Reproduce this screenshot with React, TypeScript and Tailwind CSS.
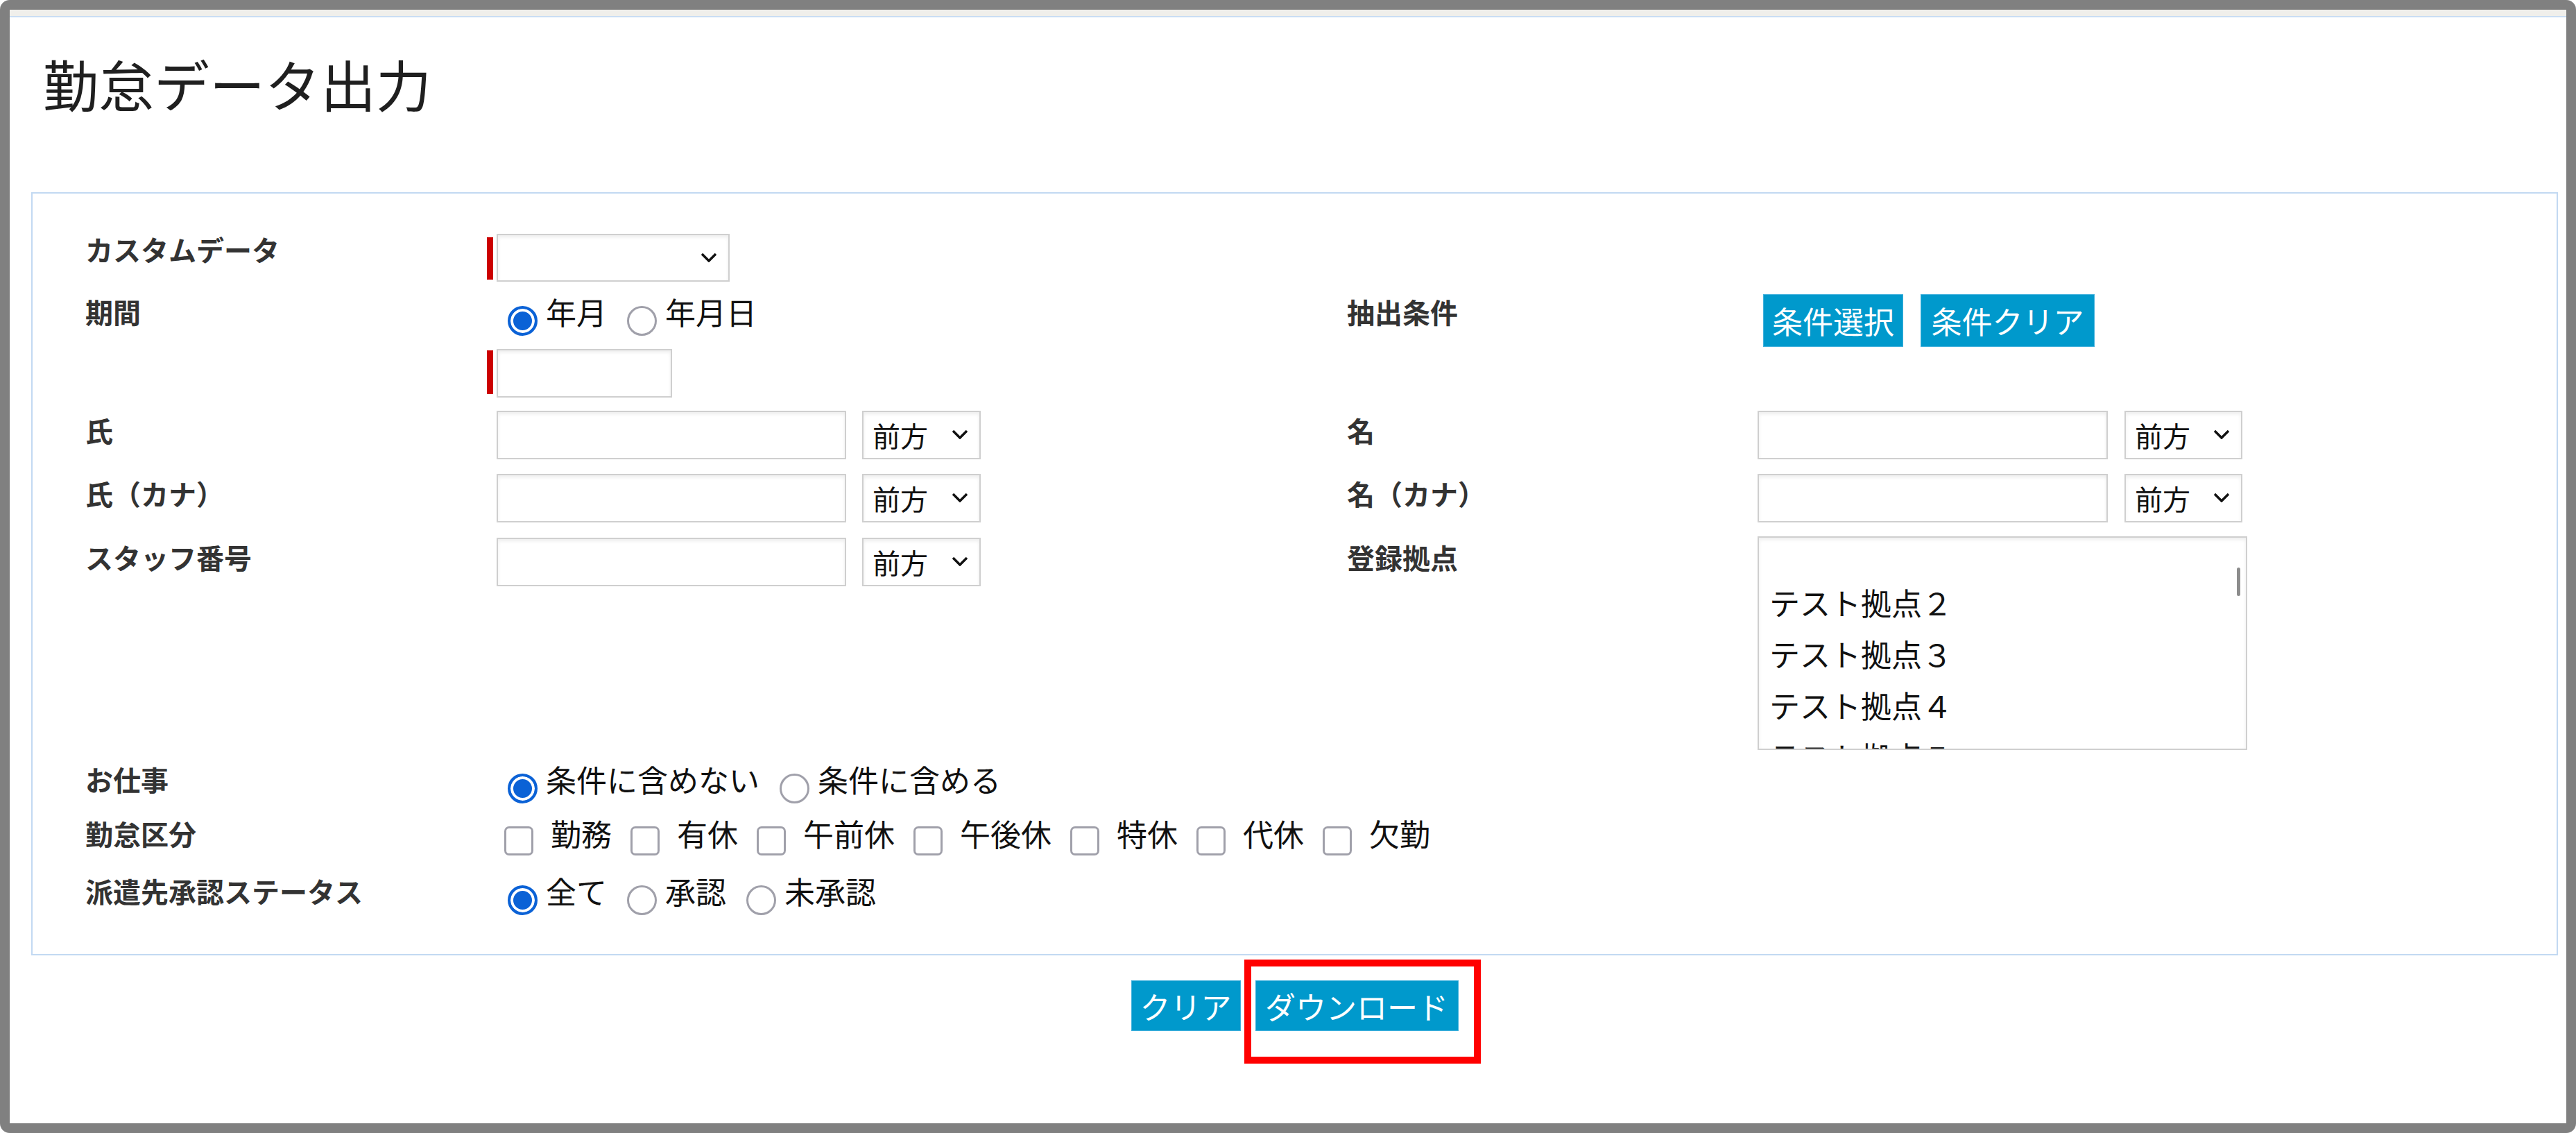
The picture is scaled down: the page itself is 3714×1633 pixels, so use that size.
import React from 'react';

const labelCls = 'shrink-0 text-[40px] leading-[60px] font-bold text-[#333333]';
const fieldCls = 'h-[70px] border-2 border-[#cfcfcf] bg-white shadow-[inset_0_3px_5px_rgba(0,0,0,0.07)]';

const Chevron = () => (
  <svg
    className="pointer-events-none absolute right-[18px] top-[27px]"
    width="24"
    height="14"
    viewBox="0 0 24 14"
  >
    <path d="M2 2 L12 12 L22 2" stroke="#111" strokeWidth="3.5" fill="none" />
  </svg>
);

const Select = ({ className, text }: { className: string; text?: string }) => (
  <div className={`relative ${className}`}>
    <select className="h-full w-full appearance-none border-2 border-[#cfcfcf] bg-white pl-[13px] text-[40px] text-[#111] shadow-[inset_0_3px_5px_rgba(0,0,0,0.07)]">
      <option>{text ?? ''}</option>
    </select>
    <Chevron />
  </div>
);

const Radio = ({ name, label, checked }: { name: string; label: string; checked?: boolean }) => (
  <label className="flex items-start">
    <input
      type="radio"
      name={name}
      defaultChecked={checked}
      className="mt-[22px] ml-[16px] mr-[12px] h-[43px] w-[43px] shrink-0 appearance-none rounded-full border-[3px] border-[#a0a0aa] bg-white checked:border-[4px] checked:border-[#0b62d6] checked:bg-[#0b62d6] checked:shadow-[inset_0_0_0_4px_white]"
    />
    <span className="mr-[13px] text-[44px] leading-[60px] text-[#111]">{label}</span>
  </label>
);

const Check = ({ label }: { label: string }) => (
  <label className="flex items-start">
    <input
      type="checkbox"
      className="mt-[20px] ml-[11px] mr-[25px] h-[42px] w-[42px] shrink-0 appearance-none rounded-[7px] border-[3px] border-[#a0a0aa] bg-white"
    />
    <span className="mr-[16px] text-[44px] leading-[60px] text-[#111]">{label}</span>
  </label>
);

const Btn = ({ className, children }: { className: string; children: React.ReactNode }) => (
  <button className={`border border-[#3fb0dc] bg-[#0099cc] text-[44px] leading-none text-white ${className}`}>
    {children}
  </button>
);

const NameField = () => (
  <div className="flex pl-[14px]">
    <input type="text" className={`mt-[2px] w-[504px] ${fieldCls}`} />
    <Select className="mt-[2px] ml-[23px] h-[70px] w-[171px]" text="前方" />
  </div>
);

export default function App() {
  const kubun = ['勤務', '有休', '午前休', '午後休', '特休', '代休', '欠勤'];

  return (
    <div className="h-screen w-screen overflow-hidden bg-white font-['Noto_Sans_CJK_JP','Noto_Sans',sans-serif]">
      <div className="flex h-full flex-col rounded-[14px] border-[14px] border-[#808080]">
        <div className="h-[11px] shrink-0 border-b-2 border-[#c9ddf4] bg-[#f0efeb]" />

        <h1 className="mt-[54px] ml-[48px] text-[80px] leading-none font-normal text-[#1f1f1f]">勤怠データ出力</h1>

        <div className="mt-[118px] ml-[31px] w-[3643px] border-2 border-[#c2d9f2] pt-[50px] pb-[57px] pl-[76px]">
          {/* カスタムデータ */}
          <div className="flex h-[90px]">
            <div className={`w-[579px] ${labelCls}`}>カスタムデータ</div>
            <div className="flex items-start">
              <span className="mt-[13px] mr-[5px] h-[61px] w-[9px] bg-[#cc0000]" />
              <Select className="mt-[8px] h-[69px] w-[336px]" />
            </div>
          </div>

          {/* 期間 / 抽出条件 */}
          <div className="flex h-[82px]">
            <div className={`w-[579px] ${labelCls}`}>期間</div>
            <div className="flex w-[1240px] pl-[14px]">
              <Radio name="kikan" label="年月" checked />
              <Radio name="kikan" label="年月日" />
            </div>
            <div className={`w-[592px] ${labelCls}`}>抽出条件</div>
            <div className="mt-[5px] ml-[8px] flex gap-[25px]">
              <Btn className="h-[76px] w-[202px]">条件選択</Btn>
              <Btn className="h-[76px] w-[251px]">条件クリア</Btn>
            </div>
          </div>

          {/* 期間入力 */}
          <div className="flex h-[89px]">
            <div className="w-[579px] shrink-0" />
            <div className="flex items-start">
              <span className="mt-[4px] mr-[5px] h-[63px] w-[9px] bg-[#cc0000]" />
              <input type="text" className={`mt-[2px] w-[253px] ${fieldCls}`} />
            </div>
          </div>

          {/* 氏 / 名 */}
          <div className="flex h-[91px]">
            <div className={`w-[579px] ${labelCls}`}>氏</div>
            <div className="w-[1240px] shrink-0">
              <NameField />
            </div>
            <div className={`w-[592px] ${labelCls}`}>名</div>
            <div className="flex">
              <input type="text" className={`mt-[2px] w-[505px] ${fieldCls}`} />
              <Select className="mt-[2px] ml-[24px] h-[70px] w-[170px]" text="前方" />
            </div>
          </div>

          {/* 氏（カナ） / 名（カナ） */}
          <div className="flex h-[92px]">
            <div className={`w-[579px] ${labelCls}`}>氏（カナ）</div>
            <div className="w-[1240px] shrink-0">
              <NameField />
            </div>
            <div className={`w-[592px] ${labelCls}`}>名（カナ）</div>
            <div className="flex">
              <input type="text" className={`mt-[2px] w-[505px] ${fieldCls}`} />
              <Select className="mt-[2px] ml-[24px] h-[70px] w-[170px]" text="前方" />
            </div>
          </div>

          {/* スタッフ番号 / 登録拠点 */}
          <div className="flex h-[320px]">
            <div className={`w-[579px] ${labelCls}`}>スタッフ番号</div>
            <div className="w-[1240px] shrink-0">
              <NameField />
            </div>
            <div className={`w-[592px] ${labelCls}`}>登録拠点</div>
            <div className="relative h-[308px] w-[706px] overflow-hidden border-2 border-[#cfcfcf] bg-white shadow-[inset_0_3px_5px_rgba(0,0,0,0.07)]">
              <ul className="pt-[56px] pl-[15px] text-[44px] text-[#111]">
                {['２', '３', '４', '５'].map((n) => (
                  <li key={n} className="h-[74px] leading-[74px]">
                    テスト拠点{n}
                  </li>
                ))}
              </ul>
              <span className="absolute top-[43px] right-[8px] h-[41px] w-[5px] rounded-full bg-[#8c8c8c]" />
            </div>
          </div>

          {/* お仕事 */}
          <div className="flex h-[78px]">
            <div className={`w-[579px] ${labelCls}`}>お仕事</div>
            <div className="flex pl-[14px]">
              <Radio name="shigoto" label="条件に含めない" checked />
              <Radio name="shigoto" label="条件に含める" />
            </div>
          </div>

          {/* 勤怠区分 */}
          <div className="flex h-[83px]">
            <div className={`w-[579px] ${labelCls}`}>勤怠区分</div>
            <div className="flex pl-[14px]">
              {kubun.map((k) => (
                <Check key={k} label={k} />
              ))}
            </div>
          </div>

          {/* 派遣先承認ステータス */}
          <div className="flex h-[64px]">
            <div className={`w-[579px] ${labelCls}`}>派遣先承認ステータス</div>
            <div className="flex pl-[14px]">
              <Radio name="status" label="全て" checked />
              <Radio name="status" label="承認" />
              <Radio name="status" label="未承認" />
            </div>
          </div>
        </div>

        <div className="mt-[36px] ml-[31px] flex w-[3643px] justify-center gap-[21px]">
          <Btn className="h-[73px] w-[158px]">クリア</Btn>
          <div className="relative">
            <Btn className="h-[73px] w-[293px]">ダウンロード</Btn>
            <span className="pointer-events-none absolute top-[-30px] right-[-32px] bottom-[-47px] left-[-16px] border-[10px] border-[#ff0000]" />
          </div>
        </div>
      </div>
    </div>
  );
}
